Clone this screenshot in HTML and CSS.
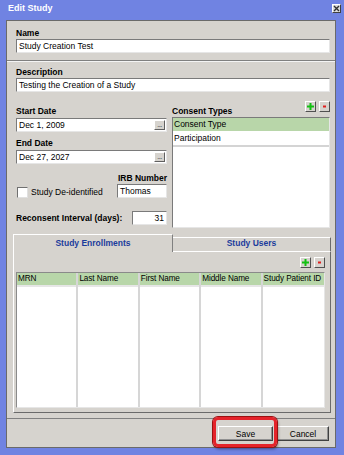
FILE: index.html
```html
<!DOCTYPE html>
<html lang="en">
<head>
    <meta charset="UTF-8">
    <title>Edit Study</title>
    <link rel="stylesheet" href="styles.css">
</head>
<body>
    <div class="window">
        <div class="titlebar">
            <span class="title">Edit Study</span>
            <span class="close-btn">
                <svg width="7" height="7" viewBox="0 0 7 7"><path d="M1 1 L6 6 M6 1 L1 6" stroke="#303030" stroke-width="1.4"/></svg>
            </span>
        </div>
        <div class="frame">
            <!-- Name -->
            <section class="name-box">
                <span class="field-label">Name</span>
                <div class="textbox">Study Creation Test</div>
            </section>

            <section class="main-box">
                <span class="field-label">Description</span>
                <div class="textbox">Testing the Creation of a Study</div>

                <div class="columns">
                    <div class="left-col">
                        <span class="field-label first">Start Date</span>
                        <div class="textbox date-box">
                            <span>Dec 1, 2009</span>
                            <span class="dots-btn">...</span>
                        </div>
                        <span class="field-label gap-6">End Date</span>
                        <div class="textbox date-box">
                            <span>Dec 27, 2027</span>
                            <span class="dots-btn">...</span>
                        </div>
                        <span class="field-label irb-label">IRB Number</span>
                        <div class="irb-row">
                            <label class="check-item">
                                <span class="checkbox"></span>
                                Study De-identified
                            </label>
                            <div class="textbox irb-box">Thomas</div>
                        </div>
                        <div class="reconsent-row">
                            <span class="bold">Reconsent Interval (days):</span>
                            <div class="textbox number-box">31</div>
                        </div>
                    </div>

                    <div class="right-col">
                        <div class="list-header">
                            <span class="field-label">Consent Types</span>
                            <div class="mini-btns">
                                <span class="mini-btn"><svg width="7" height="7" viewBox="0 0 7 7"><path d="M3.5 0 V7 M0 3.5 H7" stroke="#12c012" stroke-width="2"/></svg></span>
                                <span class="mini-btn"><svg width="7" height="7" viewBox="0 0 7 7"><path d="M2 3.5 H5" stroke="#e02020" stroke-width="2"/></svg></span>
                            </div>
                        </div>
                        <div class="list-box">
                            <div class="list-row selected">Consent Type</div>
                            <div class="list-row last">Participation</div>
                        </div>
                    </div>
                </div>

                <!-- Tabs -->
                <div class="tabs">
                    <div class="tab active">Study Enrollments</div>
                    <div class="tab">Study Users</div>
                </div>
                <div class="tab-panel">
                    <div class="mini-btns right">
                        <span class="mini-btn"><svg width="7" height="7" viewBox="0 0 7 7"><path d="M3.5 0 V7 M0 3.5 H7" stroke="#12c012" stroke-width="2"/></svg></span>
                        <span class="mini-btn"><svg width="7" height="7" viewBox="0 0 7 7"><path d="M2 3.5 H5" stroke="#e02020" stroke-width="2"/></svg></span>
                    </div>
                    <div class="grid-table">
                        <div class="grid-col"><div class="grid-head">MRN</div></div>
                        <div class="grid-col"><div class="grid-head">Last Name</div></div>
                        <div class="grid-col"><div class="grid-head">First Name</div></div>
                        <div class="grid-col"><div class="grid-head">Middle Name</div></div>
                        <div class="grid-col"><div class="grid-head">Study Patient ID</div></div>
                    </div>
                </div>
            </section>

            <div class="button-bar">
                <button class="btn save">Save<span class="highlight"></span></button>
                <button class="btn cancel">Cancel</button>
            </div>
        </div>
    </div>
</body>
</html>
```

FILE: styles.css
```css
body {
    margin: 0;
    background-color: #7083e2; /* window frame blue */
    font-family: "Liberation Sans", Arial, sans-serif;
    font-size: 8.5px;
    color: #000;
}

.window {
    width: 344px;
    height: 455px;
    overflow: hidden;
}

.titlebar {
    height: 20px;
    display: flex;
    justify-content: space-between;
    align-items: flex-start;
    padding: 3px 3px 0 8px;
    box-sizing: border-box;
}

.title {
    color: white;
    font-weight: bold;
    font-size: 9px;
    line-height: 11px;
}

.close-btn {
    width: 9px;
    height: 9px;
    margin-top: 1px;
    box-sizing: border-box;
    background-color: #dcdcdc;
    border: 1px solid;
    border-color: #fff #404040 #404040 #fff;
    display: flex;
    align-items: center;
    justify-content: center;
}

.frame {
    margin: 0 8px 0 6px;
    border: 1px solid #6a6a6a;
    background-color: #d6d3ce;
}

.field-label,
.bold {
    display: block;
    font-weight: bold;
    line-height: 11px;
}

.textbox {
    height: 14px;
    box-sizing: border-box;
    background-color: white;
    border: 1px solid;
    border-color: #7a7a7a #e6e6e6 #e6e6e6 #7a7a7a;
    line-height: 12px;
    padding: 0 2px;
    white-space: nowrap;
    overflow: hidden;
}

.name-box {
    padding: 7px 5px 7px 9px;
    border-bottom: 1px solid #808080;
}

.main-box {
    border-top: 1px solid #f4f4f4;
    padding: 5px 5px 5px 9px;
}

/* two columns: dates on the left, consent types on the right */
.columns {
    display: grid;
    grid-template-columns: 151px 1fr;
    gap: 5px;
    height: 136px;
}

.left-col .field-label {
    margin-bottom: 1px;
}

.field-label.first {
    margin-top: 14px;
}

.field-label.gap-6 {
    margin-top: 6px;
}

.date-box {
    display: flex;
    justify-content: space-between;
    align-items: center;
    padding-right: 1px;
}

.dots-btn {
    width: 11px;
    height: 10px;
    box-sizing: border-box;
    background-color: #d6d3ce;
    border: 1px solid;
    border-color: #fff #606060 #606060 #fff;
    font-size: 7px;
    line-height: 8px;
    letter-spacing: -0.5px;
    text-align: center;
    color: #222;
    overflow: hidden;
}

.left-col .irb-label {
    margin-top: 9px;
    margin-bottom: 0;
    text-align: right;
}

.irb-row {
    display: flex;
    justify-content: space-between;
    align-items: center;
    height: 14px;
}

.check-item {
    display: flex;
    align-items: center;
    gap: 3px;
    padding-left: 1px;
    padding-top: 2px;
}

.checkbox {
    width: 11px;
    height: 11px;
    box-sizing: border-box;
    background-color: white;
    border: 1px solid;
    border-color: #707070 #e0e0e0 #e0e0e0 #707070;
}

.irb-box {
    width: 50px;
}

.reconsent-row {
    display: flex;
    justify-content: space-between;
    align-items: center;
    margin-top: 13px;
}

.number-box {
    width: 35px;
    text-align: right;
}

.list-header {
    height: 25px;
    display: flex;
    justify-content: space-between;
    align-items: flex-end;
}

.mini-btns {
    display: flex;
    gap: 3px;
    margin-bottom: 5px;
}

.mini-btn {
    width: 11px;
    height: 11px;
    box-sizing: border-box;
    background-color: #d6d3ce;
    border: 1px solid;
    border-color: #fff #505050 #505050 #fff;
    display: flex;
    align-items: center;
    justify-content: center;
}

.list-box {
    height: 111px;
    box-sizing: border-box;
    background-color: white;
    border: 1px solid;
    border-color: #7a7a7a #e6e6e6 #e6e6e6 #7a7a7a;
}

.list-row {
    height: 13px;
    line-height: 13px;
    padding-left: 1px;
    border-bottom: 1px solid white;
}

.list-row.selected {
    background-color: #b8d6a9;
}

.list-row.last {
    border-bottom: 2px solid #d4d4d4;
}

/* tab strip */
.tabs {
    display: flex;
    align-items: flex-end;
    height: 18px;
    margin: 6px -1px 0 -3px;
}

.tab {
    flex: 1;
    height: 15px;
    box-sizing: border-box;
    border-top: 1px solid #fff;
    border-right: 1px solid #6a6a6a;
    border-bottom: 1px solid #fff;
    text-align: center;
    line-height: 11px;
    font-weight: bold;
    color: #1b3c9c;
}

.tab.active {
    flex: 0 0 160px;
    height: 18px;
    border-left: 1px solid #fff;
    border-right: 1px solid #808080;
    border-bottom: none;
    line-height: 17px;
}

.tab-panel {
    margin: 0 -1px 0 -3px;
    border-left: 1px solid #fff;
    border-right: 1px solid #6a6a6a;
    border-bottom: 1px solid #6a6a6a;
    padding: 5px 5px 4px 2px;
}

.mini-btns.right {
    justify-content: flex-end;
    margin-bottom: 4px;
}

.grid-table {
    height: 136px;
    box-sizing: border-box;
    border: 1px solid;
    border-color: #8a8a8a #e6e6e6 #e6e6e6 #8a8a8a;
    background-color: white;
    display: grid;
    grid-template-columns: repeat(5, 1fr);
}

.grid-col {
    border-right: 2px solid #d6d6d6;
}

.grid-col:last-child {
    border-right: none;
}

.grid-head {
    height: 12px;
    line-height: 12px;
    padding-left: 1px;
    background-color: #b8d6a9;
    border-bottom: 2px solid #e6e6e6;
    font-size: 8.2px;
    letter-spacing: -0.1px;
    white-space: nowrap;
    overflow: hidden;
}

/* bottom buttons */
.button-bar {
    border-top: 1px solid #808080;
    padding: 7px 6px 6px 0;
    display: flex;
    justify-content: flex-end;
    gap: 4px;
}

.btn {
    height: 15px;
    padding: 0;
    box-sizing: border-box;
    background-color: #d6d3ce;
    border: 1px solid;
    border-color: #fff #404040 #404040 #fff;
    box-shadow: inset -1px -1px 0 #909090;
    font-family: "Liberation Sans", Arial, sans-serif;
    font-size: 8.5px;
    color: #000;
}

.btn.save {
    width: 55px;
    position: relative;
}

.btn.cancel {
    width: 52px;
}

/* red callout drawn over the Save button */
.highlight {
    position: absolute;
    left: -6px;
    top: -10px;
    right: -5px;
    bottom: -7px;
    border: 3px solid #e4232a;
    border-radius: 5px;
    box-shadow: 0 0 0 1px #9a1010, 1px 2px 3px rgba(0, 0, 0, 0.45);
}
```
